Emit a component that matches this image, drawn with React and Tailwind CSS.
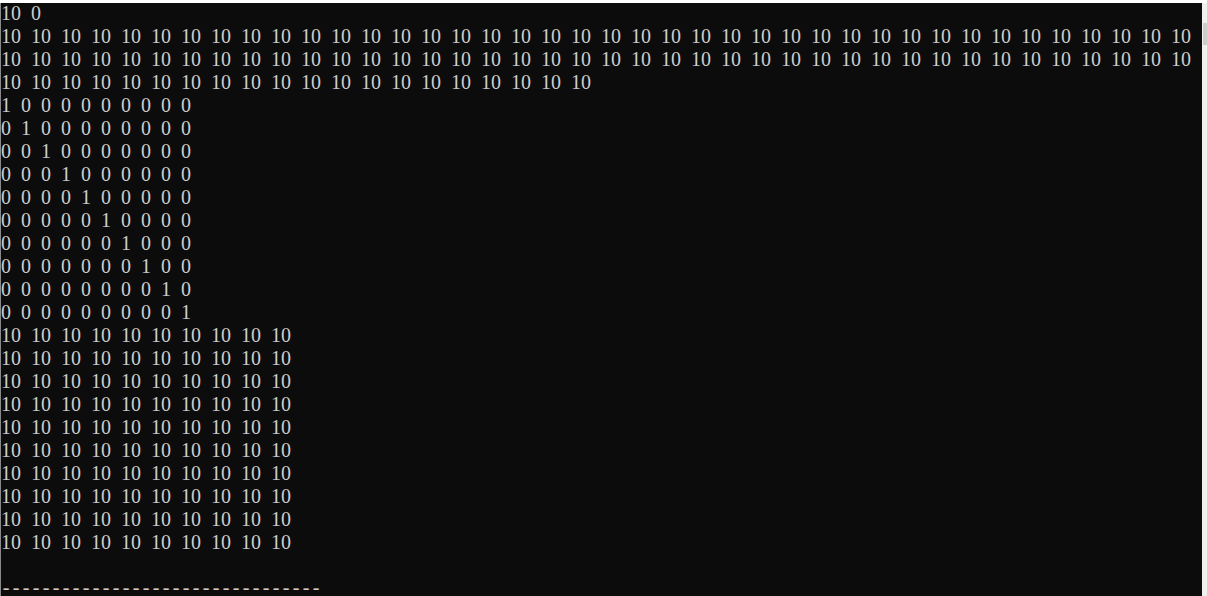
import React from "react";

const tens = (n) => Array(n).fill("10").join(" ");
const rows = [];
rows.push("10 0");
rows.push(tens(40));
rows.push(tens(40));
rows.push(tens(20));
for (let i = 0; i < 10; i++) {
  rows.push(Array.from({ length: 10 }, (_, j) => (i === j ? "1" : "0")).join(" "));
}
for (let i = 0; i < 10; i++) rows.push(tens(10));
rows.push("");

function Line({ text, cls = "h-[23px] leading-[23px]" }) {
  return (
    <div className={`${cls} whitespace-pre flex`}>
      {text.split("").map((c, i) => (
        <span key={i} className="inline-block w-[10px] text-center shrink-0">
          {c}
        </span>
      ))}
    </div>
  );
}

export default function App() {
  return (
    <div className="w-[1207px] h-[596px] overflow-hidden bg-white flex flex-col">
      <div className="h-[3px] bg-white shrink-0" />
      <div className="flex flex-1 min-h-0">
        <div className="flex-1 bg-[#0c0c0c] border-l border-[#8a8a8a] overflow-hidden text-[#cccccc] text-[20px] font-['Liberation_Serif',serif]">
          <div className="-mt-[1px]">
            {rows.map((r, i) => (
              <Line key={i} text={r} />
            ))}
            <Line text={"-".repeat(32)} cls="h-[12px] leading-[12px] mt-[4px]" />
          </div>
        </div>
        <div className="w-[5px] bg-[#f0f0f0] flex flex-col shrink-0">
          <div className="h-[20px]" />
          <div className="h-[22px] ml-[1px] bg-[#cdcdcd]" />
        </div>
      </div>
    </div>
  );
}
